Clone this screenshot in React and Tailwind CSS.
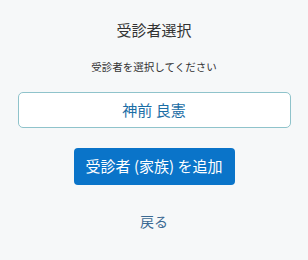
import React from 'react';

const App = () => {
  return (
    <div
      className="w-[308px] h-[260px] bg-[#f6f8f9] flex flex-col items-center"
      style={{ fontFamily: '"Noto Sans CJK JP", "Noto Sans", sans-serif' }}
    >
      <h1 className="mt-[19px] text-[15px] leading-[22px] text-[#333333]">受診者選択</h1>
      <p className="mt-[19px] text-[10.5px] leading-[14px] text-[#333333]">受診者を選択してください</p>

      <button className="mt-[18px] w-[273px] h-[36px] bg-white border border-[#8fc3cb] rounded-[5px] text-[15px] text-[#1b6ea6]">
        神前 良憲
      </button>

      <button className="mt-[20px] w-[161px] h-[37px] bg-[#0a74c9] rounded-[4px] text-[15px] text-white">
        受診者 (家族) を追加
      </button>

      <button className="mt-[26px] text-[14px] leading-[20px] text-[#3b6a93]">戻る</button>
    </div>
  );
};

export default App;
